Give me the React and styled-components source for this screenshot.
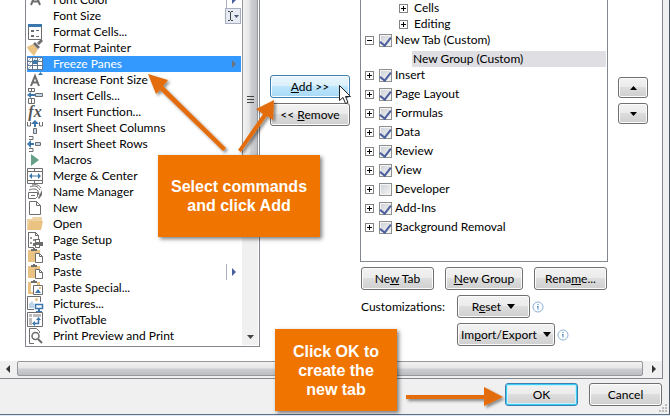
import React from "react";
import styled, { createGlobalStyle, css } from "styled-components";

const Global = createGlobalStyle`
  * { box-sizing: border-box; }
  body { margin: 0; overflow: hidden; background: #dfe9f5; color: #000; }
  body, button, input { font: 12px/16px Lato, "Open Sans", sans-serif; }
`;

const Dialog = styled.main`
  position: relative;
  display: flex;
  flex-direction: column;
  min-height: calc(100vh - 1px);
  background: #f0f0f0;
  border-right: 1px solid #4f5b6b;
  border-bottom: 1px solid #5d6f85;
`;
const Pane = styled.section`
  flex: 1;
  display: flex;
  flex-direction: column;
  margin-right: 6px;
  background: #fff;
  border-right: 1px solid #828790;
  border-bottom: 1px solid #828790;
`;
const Columns = styled.div`
  flex: 1;
  display: grid;
  grid-template-columns: minmax(0, 235fr) 80px minmax(0, 248fr) 30px;
  gap: 10px;
  padding: 0 14px 14px 25px;
`;
const CommandBox = styled.div`
  display: flex;
  height: 347px;
  border: 1px solid #828790;
  border-top: 0;
  padding: 0 1px 1px;
`;
const CommandList = styled.ul`
  flex: 1;
  display: flex;
  flex-direction: column;
  justify-content: flex-end;
  margin: 0;
  padding: 0 1px 1px 0;
  overflow: hidden;
  list-style: none;
`;
const Command = styled.li`
  flex: none;
  display: flex;
  align-items: center;
  height: 16px;
  white-space: nowrap;
  ${(p) => p.$selected && css`background: #3399ff; color: #fff;`}
`;
const CommandName = styled.span`
  flex: 1;
  padding-left: 10px;
`;
const Glyph = styled.svg`
  flex: none;
  display: block;
  overflow: visible;
`;
const SubMenu = styled.span`
  display: flex;
  align-items: center;
  justify-content: center;
  width: 15px;
  height: 16px;
  border-left: 1px solid ${(p) => (p.$line ? "#a9adc0" : "transparent")};
`;
const SizeBox = styled.span`
  display: flex;
  align-items: center;
  justify-content: center;
  width: 16px;
  height: 16px;
  background: #e6eaf2;
  border: 1px solid #a9adc0;
`;
const VScroll = styled.div`
  display: flex;
  flex-direction: column;
  width: 16px;
  background: #f0f0f0;
`;
const VThumb = styled.div`
  display: flex;
  align-items: center;
  justify-content: center;
  height: 201px;
  border: solid #95979b;
  border-width: 0 1px 1px;
  background: linear-gradient(90deg, #f3f3f3, #e5e5e6 45%, #cfd0d3 55%, #bfc0c4);
`;
const ScrollArrow = styled.span`
  display: flex;
  align-items: center;
  justify-content: center;
  width: 16px;
  height: 16px;
  margin-top: ${(p) => (p.$end ? "auto" : 0)};
`;
const Stack = styled.div`
  display: flex;
  flex-direction: column;
  gap: 5px;
  padding-top: ${(p) => p.$top}px;
`;
const Button = styled.button`
  display: flex;
  align-items: center;
  justify-content: center;
  gap: 6px;
  width: ${(p) => (p.$width ? p.$width + "px" : "auto")};
  height: ${(p) => (p.$short ? 21 : 23)}px;
  padding: 0;
  color: #000;
  white-space: nowrap;
  border: 1px solid #707070;
  border-radius: 3px;
  background: linear-gradient(#f2f2f2, #ebebeb 49%, #dddddd 50%, #cfcfcf);
  box-shadow: inset 0 0 0 1px #fcfcfc;
  ${(p) => p.$hot && css`
    border-color: #3c7fb1;
    background: linear-gradient(#eaf6fd, #d9f0fc 49%, #bee6fd 50%, #a7d9f5);
  `}
  ${(p) => p.$primary && css`
    border-color: #3c7fb1;
    box-shadow: inset 0 0 0 1px #39cdf5, inset 0 0 0 2px #c8f0fb;
  `}
`;
const Customize = styled.div`
  display: flex;
  flex-direction: column;
  gap: 5px;
`;
const Tree = styled.ul`
  height: 262px;
  margin: 0;
  padding: 0 1px 0 4px;
  border: 1px solid #828790;
  border-top: 0;
  list-style: none;
`;
const TreeRow = styled.li`
  display: flex;
  align-items: center;
  height: 16px;
  margin-top: ${(p) => (p.$spaced ? 3 : 0)}px;
  padding-left: ${(p) => p.$indent || 0}px;
  white-space: nowrap;
`;
const Expander = styled.button`
  display: flex;
  align-items: center;
  justify-content: center;
  flex: none;
  width: 9px;
  height: 9px;
  padding: 0;
  background: #fff;
  border: 1px solid #848484;
`;
const Check = styled.label`
  display: flex;
  align-items: center;
  gap: 3px;
  padding-left: 5px;
`;
const Box = styled.input`
  appearance: none;
  display: grid;
  width: 13px;
  height: 13px;
  margin: 0;
  border: 1px solid #8e8f8f;
  box-shadow: inset 0 0 0 1px #f4f4f4;
  background: linear-gradient(135deg, #cbcfd5, #f6f6f6);
  &:checked::after {
    content: "";
    place-self: center;
    width: 5px;
    height: 9px;
    border: solid #4b5f9c;
    border-width: 0 2px 2px 0;
    transform: rotate(38deg);
  }
`;
const TreeText = styled.span`
  flex: 1;
  padding-left: ${(p) => (p.$selected ? 1 : 6)}px;
  background: ${(p) => (p.$selected ? "#dfdee3" : "none")};
`;
const ButtonRow = styled.div`
  display: flex;
  justify-content: space-between;
  padding: 0 1px;
`;
const OptionLine = styled.div`
  display: flex;
  align-items: center;
  gap: 2px;
  padding-left: 1px;
`;
const OptionLabel = styled.span`
  width: 94px;
  white-space: nowrap;
`;
const HScroll = styled.div`
  display: flex;
  height: 17px;
  background: #f0f0f0;
`;
const HThumb = styled.div`
  flex: 1;
  height: 15px;
  margin: 0 3px 0 1px;
  border: 1px solid #95979b;
  border-radius: 2px;
  background: linear-gradient(#f3f3f3, #e6e6e7 45%, #cdced1 55%, #bdbec2);
`;
const Footer = styled.footer`
  display: flex;
  justify-content: flex-end;
  gap: 11px;
  height: 35px;
  padding: 4px 7px 0 0;
`;
const Callout = styled.aside`
  position: absolute;
  left: ${(p) => p.$left}px;
  top: ${(p) => p.$top}px;
  display: flex;
  align-items: center;
  justify-content: center;
  width: ${(p) => p.$width}px;
  height: 82px;
  background: #f07400;
  color: #fff;
  font: bold 16px/19px "Liberation Sans", Arial, sans-serif;
  text-align: center;
  white-space: pre-line;
  box-shadow: 2px 2px 4px rgba(0, 0, 0, 0.5);
`;
const Overlay = styled.svg`
  position: absolute;
  left: 0;
  top: 0;
  pointer-events: none;
`;
const Grip = styled.svg`
  position: absolute;
  right: 2px;
  bottom: 2px;
`;

const G = "#6d6d6d";
const B = "#3b76ad";
const Y = "#eac282";
const line = { fill: "none", stroke: G };

const clipboard = (
  <>
    <path d="M1 2h12v3h-4v9H1z" fill={Y} />
    <path d="M4 3V1h2v-1h2v1h2v2z" fill={G} />
  </>
);

const icons = {
  fontA: <path d="M4 13 8.500 2 13 13M5.500 9.500h6" fill="none" stroke={G} strokeWidth="2" />,
  cells: (
    <>
      <path d="M1.500 .5h13v15h-13z" {...line} />
      <path d="M1 0h14v3H1z" fill={B} />
      <path d="M4 6h3v2H4zM4 11h3v2H4zM9 6h3v1H9zM9 12h3v1H9z" fill={G} />
    </>
  ),
  painter: (
    <>
      <path d="M0 7 6 4l5 5-4 7C5 13 2 12 0 7z" fill={Y} />
      <path d="m6 4 2-2 5 5-2 2zM10 3l4-4 2 2-4 4z" fill={G} />
    </>
  ),
  freeze: (
    <>
      <path d="M.5 1.500h15v12H.5zM5.500 1v12M10.500 1v12M0 5.500h15M0 9.500h15" fill="#fff" stroke="#64748d" />
      <path d="M6 4h4v4H6z" fill={B} />
      <path d="m1 5 3-3M6 5l3-3M11 5l3-3M1 9l3-3M1 13l3-3" stroke="#8fb6db" />
    </>
  ),
  grow: (
    <>
      <path d="M4 14 8 4l4 10M5.500 10.500h5" fill="none" stroke={G} strokeWidth="2" />
      <path d="m11 3 2.500-3L16 3z" fill={B} />
    </>
  ),
  insertCells: (
    <>
      <path d="M1.500 0v3.500h6V.5h-6M1.500 10.500h6v5h-6zM4.500 0v3M4.500 10v5" {...line} />
      <path d="M8.500 5.500h7v3h-7z" fill="#c5d9ea" stroke={G} />
      <path d="m0 7 4-3v2h4v2H4v2z" fill={B} />
    </>
  ),
  columns: (
    <>
      <path d="M.5 2v4h3V2M12.500 2v4h3V2" {...line} />
      <path d="M6.500 8.500h3v5h-3z" fill="#c5d9ea" stroke={G} />
      <path d="m8 0 4 4H9v3H7V4H4z" fill={B} />
    </>
  ),
  rows: (
    <>
      <path d="M2 .5h4v3H2M2 12.500h4v3H2" {...line} />
      <path d="M8.500 6.500h5v3h-5z" fill="#c5d9ea" stroke={G} />
      <path d="m0 8 4-4v3h3v2H4v3z" fill={B} />
    </>
  ),
  macros: <path d="m4 2 8 6-8 6z" fill="#64a087" />,
  merge: (
    <>
      <path d="M.5.5h15v15H.5zM0 3.500h15M0 12.500h15M7.500 0v3M7.500 13v3" {...line} />
      <path d="M3 8h10" stroke={B} />
      <path d="m2 8 3-3v6zM14 8l-3-3v6z" fill={B} />
    </>
  ),
  names: (
    <>
      <path d="M1.500 8.500h9v4l-2 2h-7zM2 6c3-1 7-2 9 1l1 4M3 3c4-2 8-1 10 3M5 1c4-1 7 0 9 3" {...line} />
      <path d="m11 14 4-8v5l-3 4z" fill={G} />
      <path d="M4 11.500h4" stroke={G} />
    </>
  ),
  page: <path d="M2.500 1.500h7l4 4v9h-11zM9.500 1.500v4h4" {...line} />,
  folder: (
    <>
      <path d="M0 3h5l1-2h9v4H2L0 13z" fill="#eed2a2" />
      <path d="M2 5h14l-2 9H0z" fill={Y} />
    </>
  ),
  setup: (
    <>
      <path d="M1.500.5h7l3 3v4M1.500 0v15.500H7M8.500 0v3.500h3" {...line} />
      <path d="M3 5h2v2H3zM6 7h2v2H6zM3 10h2v2H3z" fill="#9a9a9a" />
      <path d="M8 7h5v3h3v4h-3v2H8v-2H6v-3h2z" fill={G} />
      <path d="M9 8h3v2H9zM9 13h3v2H9z" fill="#fff" />
    </>
  ),
  paste: (
    <>
      {clipboard}
      <path d="M8.500 5.500h4l3 3v6h-7zM12.500 5.500v3h3" fill="#fff" stroke={G} />
    </>
  ),
  pasteSpecial: (
    <>
      <path d="M1 2h3v10h3v2H1zM10 2h3v3h-3z" fill={Y} />
      <path d="M4 3V1h2v-1h2v1h2v2z" fill={G} />
      <path d="M6.500 5.500h9v9h-9z" fill="#fff" stroke={G} />
      <path d="m8 13 3-4 3 4z" fill={B} />
      <path d="M12 7h2v2h-2z" fill={Y} />
    </>
  ),
  pictures: (
    <>
      <path d="M7 13.500H.5V.5h13V6" {...line} />
      <path d="m2 12 0-4 3-3 2 3v4z" fill="#bcd4e7" />
      <circle cx="9.500" cy="3.500" r="1.500" fill={Y} />
      <path d="M8.500 8.500h7v4h-7z" fill="#fff" stroke={B} strokeWidth="1.500" />
      <path d="M11 13h2v2h2v1H9v-1h2z" fill={B} />
    </>
  ),
  pivot: (
    <>
      <path d="M.5.5h15v14H.5z" {...line} />
      <path d="M2 2h3v3H2zM6 2h8v3H6zM2 6h3v7H2z" fill="#bdbdbd" />
      <path d="M11.500 7v4.500H8" fill="none" stroke={B} strokeWidth="1.500" />
      <path d="m9 8 2.500-3L14 8zM8 9v5l-3-2.500z" fill={B} />
    </>
  ),
  preview: (
    <>
      <path d="M7 15.500H2.500V.5h7l3 3V5" {...line} />
      <circle cx="8.500" cy="8" r="3.500" fill="#fff" stroke={G} strokeWidth="1.500" />
      <path d="m11 11 4 4" stroke={G} strokeWidth="2" />
    </>
  ),
};

const FxText = styled.span`
  flex: none;
  width: 16px;
  color: #555;
  font: italic bold 16px/16px "Liberation Serif", serif;
  text-align: center;
`;

const commands = [
  ["Font Color", "fontA", "line"],
  ["Font Size", null, "size"],
  ["Format Cells...", "cells"],
  ["Format Painter", "painter"],
  ["Freeze Panes", "freeze", "arrow"],
  ["Increase Font Size", "grow"],
  ["Insert Cells...", "insertCells"],
  ["Insert Function...", "fx"],
  ["Insert Sheet Columns", "columns"],
  ["Insert Sheet Rows", "rows"],
  ["Macros", "macros"],
  ["Merge & Center", "merge"],
  ["Name Manager", "names"],
  ["New", "page"],
  ["Open", "folder"],
  ["Page Setup", "setup"],
  ["Paste", "paste"],
  ["Paste", "paste", "line"],
  ["Paste Special...", "pasteSpecial"],
  ["Pictures...", "pictures"],
  ["PivotTable", "pivot"],
  ["Print Preview and Print", "preview"],
];

const tabs = [
  "Insert", "Page Layout", "Formulas", "Data", "Review",
  "View", "Developer", "Add-Ins", "Background Removal",
];

const shapes = {
  up: [7, 4, "m0 4 3.500-4L7 4z"],
  down: [7, 4, "m0 0h7L3.500 4z"],
  menu: [8, 5, "m0 0h8L4 5z"],
  right: [4, 8, "m0 0 4 4-4 4z"],
  left: [4, 8, "m4 0-4 4 4 4z"],
};
function Triangle({ kind, color = "#000" }) {
  const [w, h, d] = shapes[kind];
  return (
    <Glyph width={w} height={h} aria-hidden="true">
      <path d={d} fill={color} />
    </Glyph>
  );
}

function CommandRow({ name, icon, extra }) {
  const selected = extra === "arrow";
  return (
    <Command $selected={selected}>
      {icon === "fx" ? (
        <FxText aria-hidden="true">fx</FxText>
      ) : (
        <Glyph width="16" height="16" aria-hidden="true">{icons[icon]}</Glyph>
      )}
      <CommandName>{name}</CommandName>
      {extra === "size" && (
        <SizeBox>
          <Glyph width="12" height="12" aria-hidden="true">
            <path d="M1 1.500h2M4 1.500h2M3.500 2v8M1 10.500h2M4 10.500h2" stroke="#444" />
            <path d="M7 5h5L9.500 8z" fill="#4b5878" />
          </Glyph>
        </SizeBox>
      )}
      {(extra === "line" || selected) && (
        <SubMenu $line={extra === "line"}>
          <Triangle kind="right" color={selected ? "#6c7480" : "#4b5f9c"} />
        </SubMenu>
      )}
    </Command>
  );
}

function Toggle({ open, name }) {
  return (
    <Expander type="button" aria-label={(open ? "Collapse " : "Expand ") + name}>
      <Glyph width="5" height="5">
        <path d={open ? "M0 2.500h5" : "M0 2.500h5M2.500 0v5"} stroke="#000" />
      </Glyph>
    </Expander>
  );
}

function TabRow({ name, open, spaced }) {
  return (
    <TreeRow $spaced={spaced}>
      <Toggle open={open} name={name} />
      <Check>
        <Box type="checkbox" defaultChecked={name !== "Developer"} />
        {name}
      </Check>
    </TreeRow>
  );
}

function Info() {
  return (
    <Glyph width="12" height="12" role="img" aria-label="Information">
      <circle cx="6" cy="6" r="5" fill="#fff" stroke="#8cb1d9" />
      <path d="M5.500 3h1v1h-1zM5 5h1.500v3.500H5.500V6H5z" fill="#3f7fc0" />
    </Glyph>
  );
}

export default function App() {
  return (
    <>
      <Global />
      <Dialog>
        <Pane>
          <Columns>
            <CommandBox>
              <CommandList>
                {commands.map(([name, icon, extra], i) => (
                  <CommandRow key={i} name={name} icon={icon} extra={extra} />
                ))}
              </CommandList>
              <VScroll>
                <VThumb>
                  <Glyph width="7" height="8" aria-hidden="true">
                    <path d="M0 .5h7M0 3.500h7M0 6.500h7" stroke="#444" />
                  </Glyph>
                </VThumb>
                <ScrollArrow $end><Triangle kind="down" color="#444" /></ScrollArrow>
              </VScroll>
            </CommandBox>
            <Stack $top={75}>
              <Button type="button" $hot><span><u>A</u>dd &gt;&gt;</span></Button>
              <Button type="button"><span>&lt;&lt; <u>R</u>emove</span></Button>
            </Stack>
            <Customize>
              <Tree>
                <TreeRow $indent={34}><Toggle name="Cells" /><TreeText>Cells</TreeText></TreeRow>
                <TreeRow $indent={34}><Toggle name="Editing" /><TreeText>Editing</TreeText></TreeRow>
                <TabRow name="New Tab (Custom)" open />
                <TreeRow $spaced $indent={47}><TreeText $selected>New Group (Custom)</TreeText></TreeRow>
                {tabs.map((name, i) => <TabRow key={name} name={name} spaced={i > 0} />)}
              </Tree>
              <ButtonRow>
                <Button type="button" $width={73}><span>Ne<u>w</u> Tab</span></Button>
                <Button type="button" $width={78}><span><u>N</u>ew Group</span></Button>
                <Button type="button" $width={73}><span>Rena<u>m</u>e...</span></Button>
              </ButtonRow>
              <OptionLine>
                <OptionLabel>Customizations:</OptionLabel>
                <Button type="button" $width={73}><span>R<u>e</u>set</span><Triangle kind="menu" /></Button>
                <Info />
              </OptionLine>
              <OptionLine>
                <OptionLabel />
                <Button type="button" $width={98}><span>Im<u>p</u>ort/Export</span><Triangle kind="menu" /></Button>
                <Info />
              </OptionLine>
            </Customize>
            <Stack $top={77}>
              <Button type="button" $short aria-label="Move up"><Triangle kind="up" /></Button>
              <Button type="button" $short aria-label="Move down"><Triangle kind="down" /></Button>
            </Stack>
          </Columns>
          <HScroll>
            <ScrollArrow><Triangle kind="left" color="#333" /></ScrollArrow>
            <HThumb />
            <ScrollArrow><Triangle kind="right" color="#333" /></ScrollArrow>
          </HScroll>
        </Pane>
        <Footer>
          <Button type="submit" $width={73} $primary>OK</Button>
          <Button type="button" $width={73}>Cancel</Button>
        </Footer>
        <Grip width="8" height="8" aria-hidden="true">
          <path d="M6 0h2v2H6zM3 3h2v2H3zM6 3h2v2H6zM0 6h2v2H0zM3 6h2v2H3zM6 6h2v2H6z" fill="#bcbcbc" />
        </Grip>
        <Overlay width="670" height="416" aria-hidden="true">
          <defs>
            <filter id="shade" x="-20%" y="-20%" width="150%" height="150%">
              <feDropShadow dx="2" dy="2" stdDeviation="1.500" floodOpacity="0.450" />
            </filter>
          </defs>
          <g filter="url(#shade)" fill="#e36c0a" stroke="none">
            <path d="m148 74 20 6-5 6 63 62-3 3-63-61-4 4z" />
            <path d="m274 100-1 20-6-4-26 36-3-2 25-36-7-5z" />
            <path d="M406 395h78v-8l19 10-19 9v-7h-78z" />
          </g>
        </Overlay>
        <Callout $left={158} $top={155} $width={162}>{"Select commands\nand click Add"}</Callout>
        <Callout $left={275} $top={329} $width={122}>{"Click OK to\ncreate the\nnew tab"}</Callout>
        <Overlay width="670" height="416" aria-hidden="true">
          <path d="M339.500 85.500v15l3.500-3 2.500 6 2.500-1-2.500-6h5z" fill="#fff" stroke="#222" />
        </Overlay>
      </Dialog>
    </>
  );
}
